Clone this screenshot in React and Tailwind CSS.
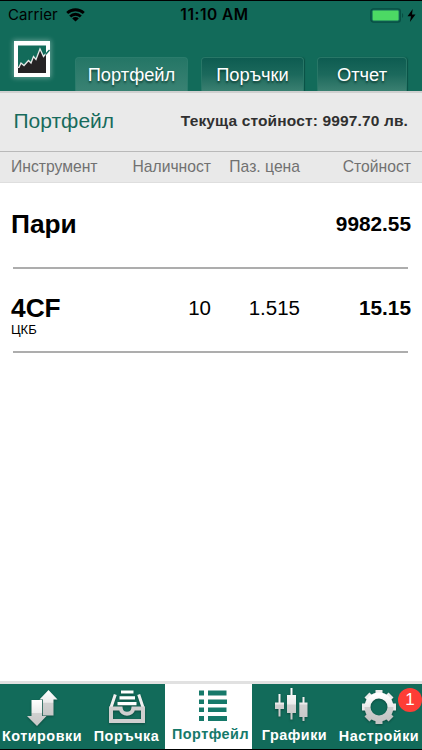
const holdings = [
  { name: 'Пари', value: '9982.55' },
  { name: '4CF', issuer: 'ЦКБ', quantity: '10', price: '1.515', value: '15.15' },
];

const StatusBar = () => (
  <div className="grid h-[28px] grid-cols-3 items-center pr-[6px] pl-2 text-black">
    <div className="flex items-center gap-2">
      <span className="font-['Inter','Liberation_Sans',sans-serif] text-[15px] leading-[20px] tracking-[0.1px]">Carrier</span>
      <svg width="19" height="14" viewBox="0 0 19 14" fill="none" stroke="currentColor" strokeWidth="2.8">
        <path d="M1.2 5.1a12 12 0 0 1 16.6 0" />
        <path d="M4.2 8.4a7.6 7.6 0 0 1 10.6 0" />
        <path d="M9.5 13.4 6.2 10.4a4.7 4.7 0 0 1 6.6 0z" fill="currentColor" stroke="none" />
      </svg>
    </div>
    <span className="pl-[5px] text-center font-['Inter','Liberation_Sans',sans-serif] text-[15.5px] leading-[20px] font-semibold tracking-[0.5px] whitespace-nowrap">
      11:10 AM
    </span>
    <div className="flex items-center justify-end gap-[3px]">
      <svg width="34" height="15" viewBox="0 0 34 15">
        <rect x="0.9" y="0.9" width="29.4" height="13.2" rx="2.6" fill="none" stroke="#084f43" strokeWidth="1.4" />
        <rect x="2.6" y="2.6" width="26" height="9.8" rx="0.8" fill="#4cd964" />
        <path d="M32 5v5c1.6-.8 1.6-4.2 0-5z" fill="#084f43" />
      </svg>
      <svg width="9" height="13" viewBox="0 0 9 13" fill="currentColor">
        <path d="M5.7 0 .5 7.3H4L2.9 13 8.5 5.4H5z" />
      </svg>
    </div>
  </div>
);

const Logo = () => (
  <svg className="shadow-[0_0_5px_1px_rgba(255,255,255,0.35)]" width="36" height="36" viewBox="0 0 36 36">
    <rect width="36" height="36" fill="#fff" />
    <rect x="4" y="4.5" width="28" height="27.5" fill="#126b5a" />
    <path d="M4 32v-6l3-4 3 2.5 4.5-5L17 22l2.5-6 2.5 3 4-11 3.5 8 2.5-3v19z" fill="#252224" />
    <path d="M3 26.3h2L7 22l3 2.5 4.5-5L17 22l2.5-6.5L22 18.5 26 8l3.5 7.5L32 12.5" fill="none" stroke="#e8e8e8" strokeWidth="1.3" />
    <path d="m31.5 13.5 4-4.5" stroke="#126b5a" strokeWidth="1.4" />
  </svg>
);

const QuotesIcon = () => (
  <svg width="31" height="36" viewBox="0 0 31 36">
    <path d="M21.5 0 30.5 9.5H26.5V25.5H16V9.5h-3.5z" fill="url(#silver)" />
    <path d="M4.5 10h10.7v16h4.3L10 36 0 26h4.5z" fill="url(#silver)" />
  </svg>
);

const OrderIcon = () => (
  <svg width="36" height="33" viewBox="0 0 36 33" fill="none">
    <path d="M12 2h12.5M10.5 7.8h15.500M8.5 13.6h19" stroke="#fff" strokeWidth="3.2" />
    <path d="M6.3 4.5 1.8 18M29.7 4.5 34.2 18" stroke="#f0f0f0" strokeWidth="3" />
    <path d="M2 18.500h9.700c1 7 11.600 7 12.600 0H34V31H2z" stroke="#cfcfcf" strokeWidth="4" />
  </svg>
);

const PortfolioIcon = () => (
  <svg width="29" height="32" viewBox="0 0 29 32" fill="#16796a">
    <path d="M0 .5h5v5H0zM9 .5h18.500v5H9zM0 9.500h5V14H0zM9 9.500h19V14H9zM0 17.500h5V22H0zM9 17.500h18.500V22H9zM0 26h5v5H0zM9 26h19v5H9z" />
  </svg>
);

const ChartsIcon = () => (
  <svg width="33" height="34" viewBox="0 0 33 34" fill="url(#silver)">
    <path d="M3.500 6h2v8.500H9V21H5.500v7.500h-2V21H0v-6.500h3.500zM15.500 0h2v7H21v18h-3.500v6.500h-2V25H12V7h3.500zM27.500 9h2v5.500h3V29h-3v4h-2v-4h-3.200V14.500h3.200z" />
  </svg>
);

// Eight teeth round a ring, one every 45 degrees
const SettingsIcon = () => (
  <svg width="36" height="36" viewBox="0 0 36 36">
    {[0, 45, 90, 135, 180, 225, 270, 315].map((angle) => (
      <path key={angle} d="M14.500 6V1h7v5z" fill={angle > 90 && angle < 270 ? '#c4c4c4' : '#ececec'} transform={`rotate(${angle} 18 18)`} />
    ))}
    <circle cx="18" cy="18" r="11.500" fill="none" stroke="url(#silver)" strokeWidth="6" />
  </svg>
);

const SectionTab = ({ label, active, className }) => (
  <button
    className={`h-[34px] rounded-t-[4px] border border-b-0 bg-linear-to-b text-[18.3px] leading-[32px] text-white [text-shadow:0_2px_2px_rgba(0,40,32,0.65)] ${
      active
        ? 'border-[#2b7c6c] from-[#247666] to-[#398273]'
        : 'border-[#287767] from-[#0d5c51] via-[#1b695c] to-[#3a8071] shadow-[1px_0_1px_#0b5145]'
    } ${className}`}
  >
    {label}
  </button>
);

const NavItem = ({ label, icon, active, className, iconClass = '', labelClass }) => (
  <button className={`flex h-[65px] shrink-0 flex-col items-center ${active ? 'bg-white text-[#16796a]' : 'text-white'} ${className}`}>
    <span className={`flex h-[40px] items-center ${active ? '' : 'drop-shadow-[0_1px_1px_rgba(0,0,0,0.3)]'} ${iconClass}`}>{icon}</span>
    <span className={`text-[14.4px] font-bold tracking-[0.5px] whitespace-nowrap ${labelClass}`}>{label}</span>
  </button>
);

const App = () => {
  return (
    <div className="flex h-[750px] w-[422px] flex-col overflow-hidden bg-white font-['Liberation_Sans',Arial,sans-serif]">
      <svg width="0" height="0" className="absolute">
        <defs>
          <linearGradient id="silver" x1="0" y1="0" x2="0" y2="1">
            <stop offset="0" stopColor="#fff" />
            <stop offset="0.48" stopColor="#ebebeb" />
            <stop offset="0.52" stopColor="#d0d0d0" />
            <stop offset="1" stopColor="#c6c6c6" />
          </linearGradient>
        </defs>
      </svg>

      <header className="h-[91px] shrink-0 border-t border-black bg-[#126b5a]">
        <StatusBar />
        <div className="flex h-[62px] items-end pl-[14px]">
          <div className="mb-[14px]"><Logo /></div>
          <SectionTab label="Портфейл" active className="ml-[25px] w-[113px]" />
          <SectionTab label="Поръчки" className="ml-[13px] w-[103px]" />
          <SectionTab label="Отчет" className="ml-[13px] w-[90px]" />
        </div>
      </header>

      <section className="flex h-[61px] shrink-0 items-center justify-between border-t-2 border-b border-t-[#d0d0d0] border-b-[#b9b9b9] bg-[#eaeaea] pr-[14px] pb-[3px] pl-[13.5px]">
        <h1 className="text-[21px] leading-[24px] text-[#176b5c]">Портфейл</h1>
        <p className="text-[15.5px] leading-[20px] font-bold tracking-[0.14px] text-[#303030]">Текуща стойност: 9997.70 лв.</p>
      </section>

      <div className="grid h-[31px] shrink-0 grid-cols-[111px_89px_89px_111px] items-center border-b border-[#dedede] bg-[#e9e9e9] pl-[11px] text-right text-[15.7px] leading-[20px] text-[#717171]">
        <span className="text-left">Инструмент</span>
        <span className="-ml-3">Наличност</span>
        <span>Паз. цена</span>
        <span>Стойност</span>
      </div>

      <main className="grow">
        {holdings.map((row) => (
          <div key={row.name} className="h-[84px]">
            <div className="grid h-[84px] grid-cols-[111px_89px_89px_111px] items-center pb-[3px] pl-[11px] text-right text-[20.5px] leading-[24px] text-black">
              <div className="text-left">
                <div className="text-[26.3px] leading-[28px] font-bold">{row.name}</div>
                {row.issuer && <div className="mt-px -mb-[15px] text-[13px] leading-[14px]">{row.issuer}</div>}
              </div>
              <span>{row.quantity}</span>
              <span>{row.price}</span>
              <span className="text-[20.8px] font-bold">{row.value}</span>
            </div>
            <div className="mr-[14px] ml-[13px] h-[1.5px] bg-[#adadad]" />
          </div>
        ))}
      </main>

      <nav className="flex h-[69px] shrink-0 border-t-[3px] border-b border-t-[#e1e1e1] border-b-black bg-[#126b5a]">
        <NavItem label="Котировки" icon={<QuotesIcon />} className="w-[84px] pt-[4px]" labelClass="leading-[17px]" />
        <NavItem label="Поръчка" icon={<OrderIcon />} className="w-[81px] pt-[2px] pl-[4px]" labelClass="leading-[21px]" />
        <NavItem label="Портфейл" icon={<PortfolioIcon />} active className="w-[87px] pt-[2px] pl-[4px]" iconClass="ml-[6px]" labelClass="leading-[16px]" />
        <NavItem label="Графики" icon={<ChartsIcon />} className="w-[84px] pt-px pl-px" iconClass="mr-[7px]" labelClass="leading-[20px]" />
        <div className="relative">
          <NavItem label="Настройки" icon={<SettingsIcon />} className="w-[86px] pt-[3px]" labelClass="leading-[18px]" />
          <span className="absolute top-[4px] right-0 flex size-[24px] items-center justify-center rounded-full bg-[#fe3d36] text-[17px] leading-[24px] text-white">1</span>
        </div>
      </nav>
    </div>
  );
};

export default App;
